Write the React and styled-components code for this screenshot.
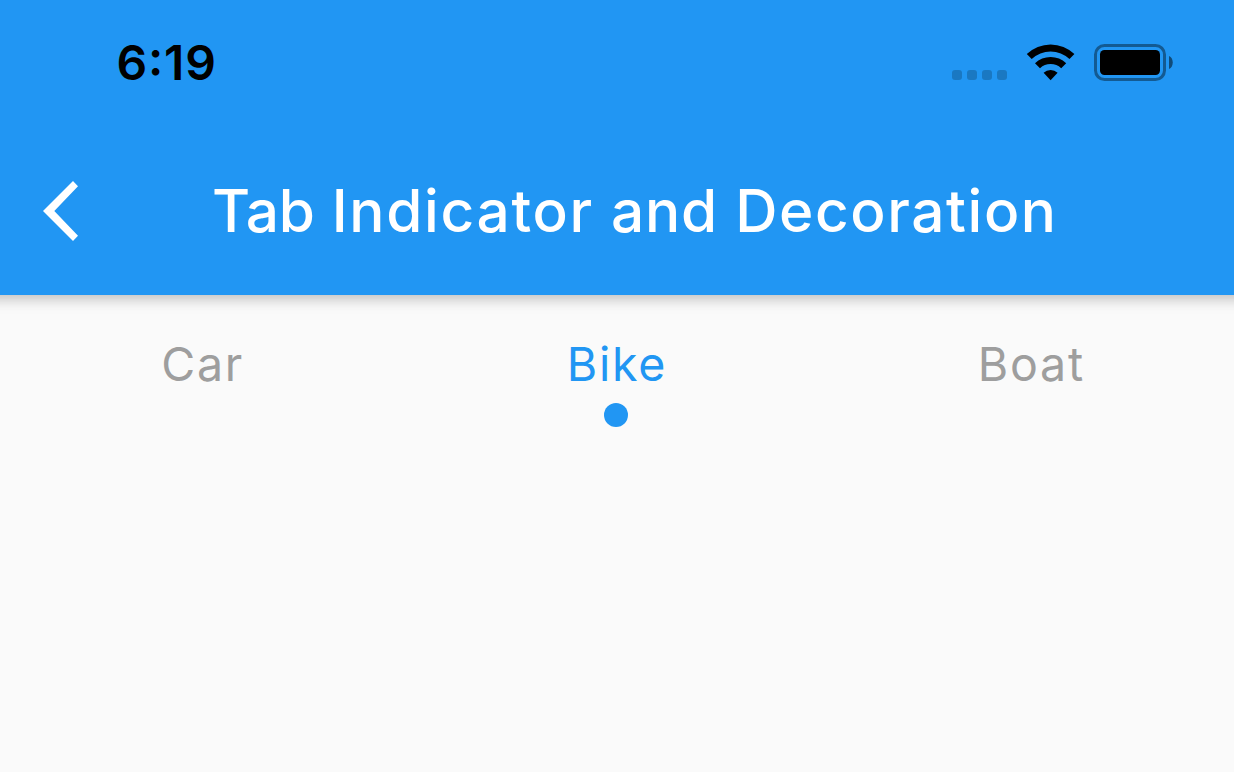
import React from "react";
import styled, { createGlobalStyle } from "styled-components";

const GlobalStyle = createGlobalStyle`
  * { box-sizing: border-box; }
  body { margin: 0; background: #fafafa; font-family: Inter, "Liberation Sans", sans-serif; font-optical-sizing: none; font-variation-settings: "opsz" 14; }
`;

const Screen = styled.div`
  width: 1234px;
  height: 772px;
  overflow: hidden;
  background: #fafafa;
`;

const Header = styled.header`
  height: 295px;
  margin: 0 -20px;
  padding: 0 20px;
  background: #2196f3;
  box-shadow: 0 6px 12px -3px rgba(0, 0, 0, 0.14), 0 3px 16px rgba(0, 0, 0, 0.14);
`;

const StatusBar = styled.div`
  display: flex;
  align-items: center;
  justify-content: space-between;
  height: 125px;
  padding: 0 61px 0 116.5px;
`;

const Clock = styled.time`
  font-size: 48px;
  font-weight: 600;
  font-feature-settings: "calt" 1, "case" 1;
  letter-spacing: 0.8px;
  line-height: 60px;
  padding-top: 1px;
  color: #000;
`;

const StatusIcons = styled.div`
  display: flex;
  align-items: center;
  svg { display: block; }
`;

const SignalDots = styled.div`
  display: flex;
  gap: 5px;
  margin: 25px 20px 0 0;
`;

const SignalDot = styled.i`
  width: 10px;
  height: 10px;
  border-radius: 3px;
  background: rgba(0, 0, 0, 0.2);
`;

const Toolbar = styled.div`
  display: flex;
  align-items: center;
  height: 168px;
  margin-top: 2px;
  padding-left: 42px;
`;

const BackButton = styled.button`
  display: flex;
  width: 170px;
  padding: 0;
  border: 0;
  background: none;
`;

const Title = styled.h1`
  margin: 0;
  font-size: 58.5px;
  line-height: 72px;
  font-weight: 500;
  letter-spacing: 1.4px;
  white-space: nowrap;
  color: #fff;
`;

const TitleWord = styled.span`
  letter-spacing: ${({ $tracking }) => $tracking}px;
`;

const Tabs = styled.nav`
  display: grid;
  grid-template-columns: repeat(3, 1fr);
  margin: 0 -4px 0 -5px;
  padding-top: 39px;
`;

const Tab = styled.div`
  display: flex;
  flex-direction: column;
  align-items: center;
  font-size: 46.5px;
  line-height: 60px;
  font-weight: 400;
  letter-spacing: 1.8px;
  color: ${({ $active }) => ($active ? "#2196f3" : "#9e9e9e")};
`;

const TabLabel = styled.span`
  padding-left: 1px;
`;

const Indicator = styled.span`
  width: 24px;
  height: 24px;
  margin-top: 9px;
  border-radius: 50%;
  background: #2196f3;
`;

const WifiIcon = () => (
  <svg width="48" height="37" viewBox="0 0 48 37" overflow="visible" style={{ marginRight: 19 }}>
    <path d="M-.2 10.1A34.2 34.2 0 0 1 47.4 10.1L42.5 15.1A27.5 27.5 0 0 0 4.7 15.1Z" />
    <path d="M8 19.2A22.5 22.5 0 0 1 39.2 19.2L34.2 24.3A15.5 15.5 0 0 0 13 24.3Z" />
    <path d="M16.6 28.8A10.3 10.3 0 0 1 30.6 28.8L23.6 36.2Z" />
  </svg>
);

const BatteryIcon = () => (
  <svg width="79" height="37" viewBox="0 0 79 37">
    <rect x="1.5" y="1.5" width="69" height="34" rx="9" fill="none" stroke="#000" strokeOpacity=".4" strokeWidth="3" />
    <rect x="6" y="6" width="60" height="25" rx="4.5" />
    <path d="M75 12C80 14 80 23 75 25Z" fillOpacity=".5" />
  </svg>
);

const items = ["Car", "Bike", "Boat"];

export default function App() {
  const active = "Bike";
  return (
    <Screen>
      <GlobalStyle />
      <Header>
        <StatusBar>
          <Clock>6:19</Clock>
          <StatusIcons>
            <SignalDots>
              {[0, 1, 2, 3].map((n) => <SignalDot key={n} />)}
            </SignalDots>
            <WifiIcon />
            <BatteryIcon />
          </StatusIcons>
        </StatusBar>
        <Toolbar>
          <BackButton aria-label="Back">
            <svg width="36" height="60" viewBox="0 0 36 60">
              <path d="M31 0L36 5.3L12.3 30L36 54.7L31 60L1 30Z" fill="#fff" />
            </svg>
          </BackButton>
          <Title>
            <TitleWord $tracking={-0.2}>Tab</TitleWord>{" "}
            <TitleWord $tracking={1.7}>Indicator</TitleWord>{" "}
            <TitleWord $tracking={0.9}>and</TitleWord>{" "}
            <TitleWord $tracking={1.6}>Decoration</TitleWord>
          </Title>
        </Toolbar>
      </Header>
      <Tabs>
        {items.map((item) => (
          <Tab key={item} $active={item === active}>
            <TabLabel>{item}</TabLabel>
            {item === active && <Indicator />}
          </Tab>
        ))}
      </Tabs>
    </Screen>
  );
}
